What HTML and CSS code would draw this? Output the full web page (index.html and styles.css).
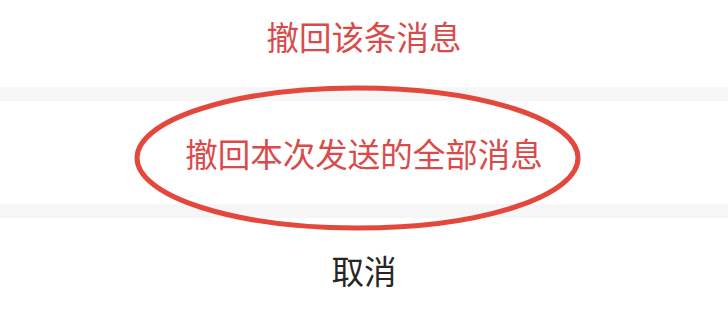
FILE: index.html
```html
<!DOCTYPE html>
<html lang="zh-CN">
<head>
<meta charset="utf-8">
<link rel="stylesheet" href="styles.css">
</head>
<body>
<div class="sheet">
  <div class="item danger">撤回该条消息</div>
  <div class="gap"></div>
  <div class="item danger">撤回本次发送的全部消息</div>
  <div class="gap"></div>
  <div class="item">取消</div>
  <svg class="mark" width="728" height="321" viewBox="0 0 728 321">
    <ellipse cx="357.5" cy="158" rx="220.5" ry="70" fill="none" stroke="#e4483c" stroke-width="5"/>
  </svg>
</div>
</body>
</html>
```
FILE: styles.css
```css
html, body {
  margin: 0;
  padding: 0;
  background: #ffffff;
  overflow: hidden;
}
.sheet {
  position: relative;
  width: 728px;
  height: 321px;
  overflow: hidden;
  font-family: "Noto Sans CJK SC", "Noto Sans", sans-serif;
}
.item {
  height: 103px;
  display: flex;
  align-items: center;
  justify-content: center;
  font-size: 32.5px;
  color: #262626;
  background: #ffffff;
}
.item:first-child {
  margin-top: -16px;
}
.item.danger {
  color: #d94b4b;
}
.gap {
  height: 14px;
  background: #f6f6f6;
}
.mark {
  position: absolute;
  left: 0;
  top: 0;
  pointer-events: none;
}
```
